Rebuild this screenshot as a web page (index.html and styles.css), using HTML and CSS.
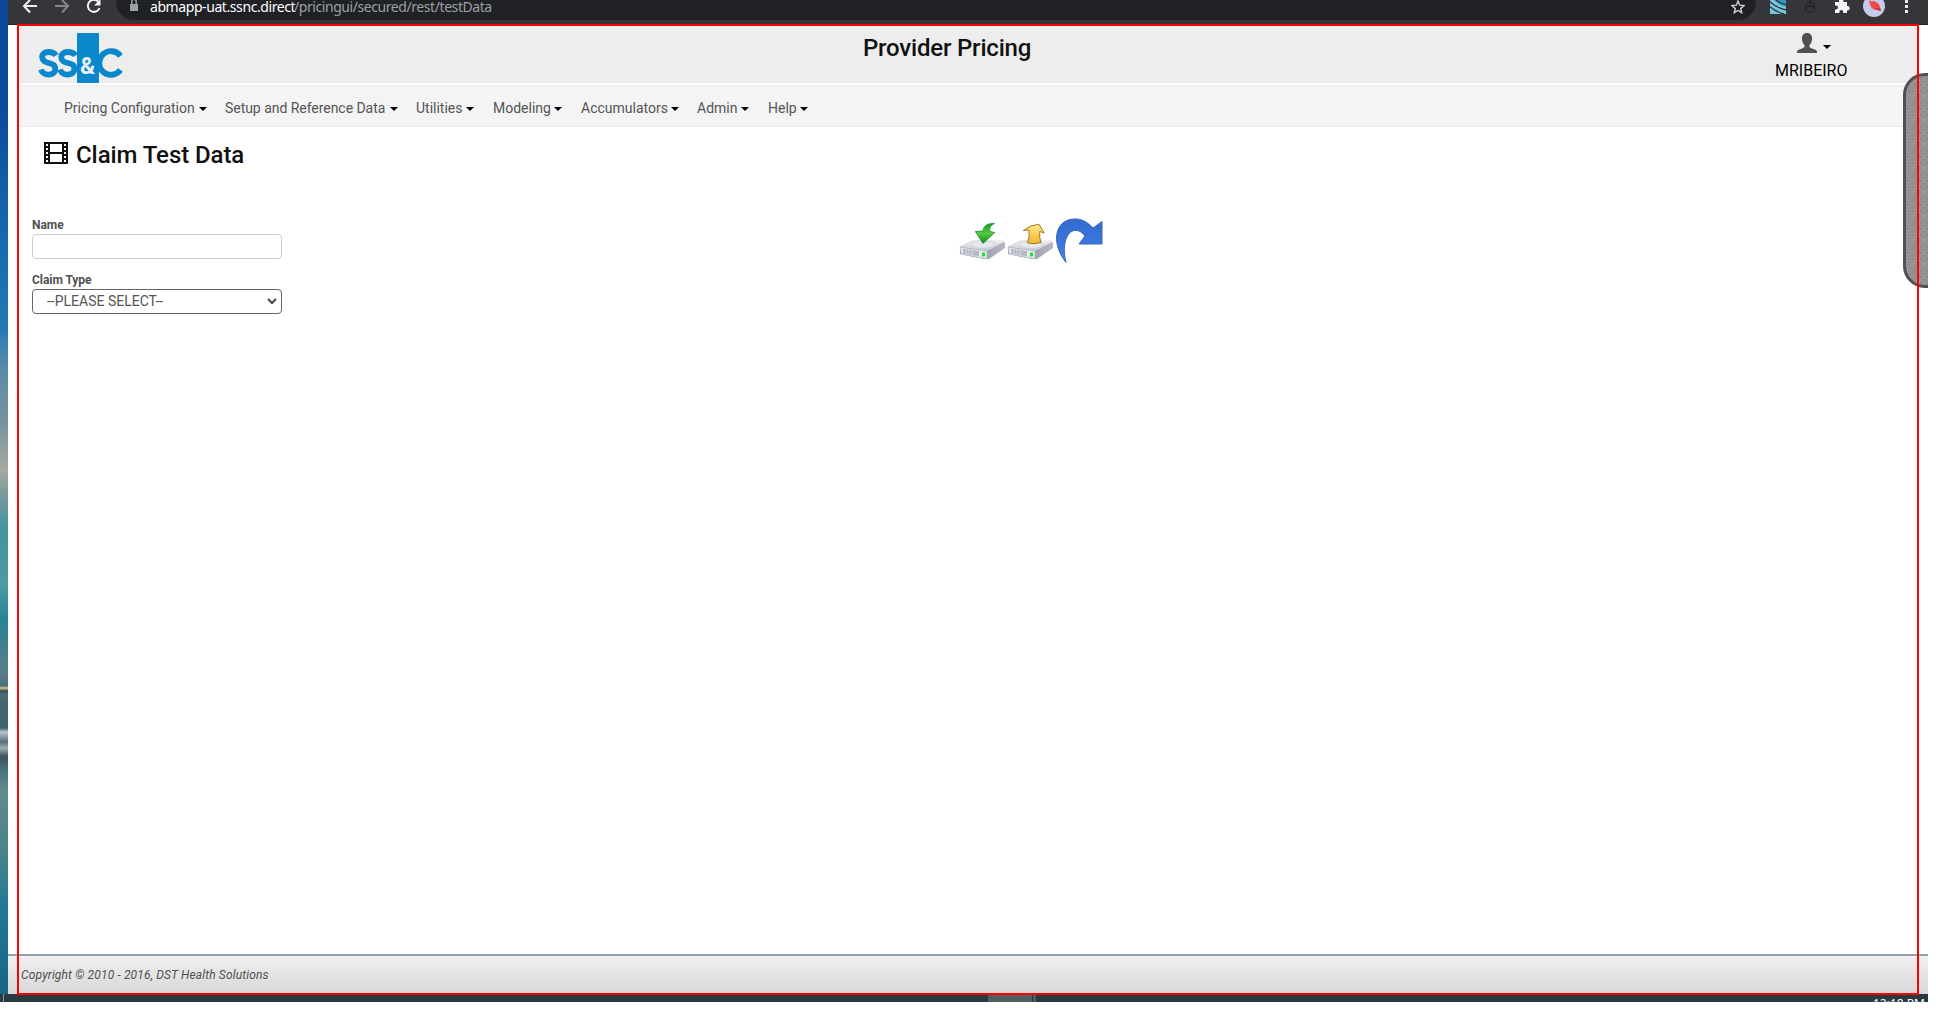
FILE: index.html
```html
<!DOCTYPE html>
<html lang="en">
<head>
<meta charset="utf-8">
<title>Provider Pricing</title>
<link rel="stylesheet" href="styles.css">
</head>
<body>
<div class="screen">
  <div class="workspace">
    <div class="wallpaper"></div>
    <div class="browser">
      <div class="toolbar">
        <svg class="nav-icons" width="100" height="25" viewBox="8 0 100 25" fill="none" stroke-width="2">
          <path d="M37 6H24M30 0L24 6L30 12.5" stroke="#f1f3f4"/>
          <path d="M55 6H68M62 0L68 6L62 12.5" stroke="#85878a"/>
          <path d="M98.500 2A6 6 0 1 0 99.500 8" stroke="#f1f3f4"/><path d="M100.500 -1V5.500H94Z" fill="#f1f3f4"/>
        </svg>
        <div class="address">
          <svg class="lock" width="10" height="12" viewBox="0 0 10 12"><path d="M1 4H9V11H1Z" fill="#9aa0a6"/><path d="M2.800 5V1.500a2.200 2.200 0 0 1 4.400 0V5" fill="none" stroke="#9aa0a6" stroke-width="1.400"/></svg>
          <span class="host">abmapp-uat.ssnc.direct</span><span class="path">/pricingui/secured/rest/testData</span>
          <svg class="star" width="14" height="14" viewBox="0 0 14 14"><path d="M7 1L8.700 5.200L13 5.600L9.700 8.500L10.700 12.700L7 10.500L3.300 12.700L4.300 8.500L1 5.600L5.300 5.200Z" fill="none" stroke="#d2d4d6" stroke-width="1.400"/></svg>
        </div>
        <svg class="extensions" width="172" height="25" viewBox="1756 0 172 25">
          <path d="M1770 0H1786V14H1770Z" fill="#73c8dc"/><path d="M1774 0H1786V7Q1779 5 1774 0Z" fill="#3297c5"/>
          <path d="M1769 1Q1778 9 1787 10M1769 6Q1776 12 1784 14M1775 -1Q1780 4 1787 5" fill="none" stroke="#35363a" stroke-width="1.300"/>
          <path d="M1805.500 6.500H1814.500V8a4.500 4.500 0 0 1-9 0ZM1806 6Q1806 2 1810 2T1814 6M1810 2V6M1810 2V0" fill="none" stroke="#202124" stroke-width="1.200"/>
          <path d="M1835 2h4V1a2.200 2.200 0 0 1 4.400 0v1h3.600v4h.500a2.200 2.200 0 0 1 0 4.400h-.5V13h-3.800v-1a1.900 1.900 0 0 0-3.800 0v1H1835V9.500h1a2 2 0 0 0 0-4h-1Z" fill="#f1f3f4"/>
          <circle cx="1874" cy="6" r="11" fill="#c5cae9"/><path d="M1869 -1Q1870 2 1873 1Q1879 2 1880 7L1881 11L1878 10Q1869 10 1869 -1Z" fill="#f04b4b"/><path d="M1874 9L1880 8L1881 11Z" fill="#c6284b"/>
          <g fill="#e8eaed"><rect x="1905" y="0" width="3" height="3"/><rect x="1905" y="5" width="3" height="3"/><rect x="1905" y="10" width="3" height="3"/></g>
        </svg>
      </div>
      <main class="page">
        <header class="header">
          <svg class="logo" width="86" height="50" viewBox="0 0 86 50">
            <rect x="39" width="22" height="50" fill="#0b87cc"/>
            <g fill="none" stroke="#0b87cc" stroke-width="5.800">
              <path d="M18 22.500C16 19 13 19 10.500 19C2 19 2.500 28 9 29.500C15 31 18 32 17 38C15 43 5 43 3 36.500"/>
              <path d="M37.500 22.500C35.500 19 32.500 19 29.500 19C21.500 19 21.500 28 28 29.500C34.500 31 37.500 32 36 38C34 43 24 43 22 36.500"/>
              <path d="M82.500 23A11.800 11.800 0 1 0 82.500 37"/>
            </g>
            <text x="42" y="40.500" class="ampersand">&amp;</text>
          </svg>
          <h1 class="app-title">Provider Pricing</h1>
          <div class="user">
            <div class="avatar">
              <svg width="20" height="20" viewBox="0 0 20 20"><path d="M10 0C13.500 0 15.500 2.500 15 6.500C14.800 8.700 13.800 11 12.500 12V14Q13 15 19 17Q20 17.500 20 20H0Q0 17.500 1 17Q7 15 7.500 14V12C6.200 11 5.200 8.700 5 6.500C4.500 2.500 6.500 0 10 0Z" fill="#505050"/></svg>
              <i class="caret"></i>
            </div>
            <div class="username">MRIBEIRO</div>
          </div>
        </header>
        <nav class="menu">
          <a class="m1"><span>Pricing Configuration</span><i class="caret"></i></a>
          <a class="m2"><span>Setup and Reference Data</span><i class="caret"></i></a>
          <a class="m3"><span>Utilities</span><i class="caret"></i></a>
          <a class="m4"><span>Modeling</span><i class="caret"></i></a>
          <a class="m5"><span>Accumulators</span><i class="caret"></i></a>
          <a class="m6"><span>Admin</span><i class="caret"></i></a>
          <a class="m7"><span>Help</span><i class="caret"></i></a>
        </nav>
        <div class="heading">
          <svg width="24" height="22" viewBox="0 0 24 22"><path fill="#111" fill-rule="evenodd" d="M0 0H24V22H0ZM6 2V10H18V2ZM6 12V20H18V12ZM2 2v2h2V2ZM2 6v2h2V6ZM2 10v2h2v-2ZM2 14v2h2v-2ZM2 18v2h2v-2ZM20 2v2h2V2ZM20 6v2h2V6ZM20 10v2h2v-2ZM20 14v2h2v-2ZM20 18v2h2v-2Z"/></svg>
          <h2>Claim Test Data</h2>
        </div>
        <section class="content">
          <form class="filters">
            <label for="name">Name</label>
            <input id="name" type="text">
            <label for="type">Claim Type</label>
            <div class="select" id="type"><span>--PLEASE SELECT--</span>
              <svg width="10" height="7" viewBox="0 0 10 7"><path d="M1 1L5 5L9 1" fill="none" stroke="#444" stroke-width="2"/></svg>
            </div>
          </form>
          <svg class="actions" width="150" height="50" viewBox="957 215 150 50">
            <defs>
              <linearGradient id="steel" x2="0" y2="1"><stop stop-color="#eef0f3"/><stop offset="1" stop-color="#c9cbd3"/></linearGradient>
              <linearGradient id="side"><stop stop-color="#858896"/><stop offset="1" stop-color="#b4b7c2"/></linearGradient>
              <linearGradient id="green" x2="0" y2="1"><stop stop-color="#159b22"/><stop offset=".5" stop-color="#58c842"/><stop offset="1" stop-color="#0c8a18"/></linearGradient>
              <linearGradient id="gold" x2="0" y2="1"><stop stop-color="#ffe991"/><stop offset="1" stop-color="#efb62d"/></linearGradient>
              <linearGradient id="blue" x2="0" y2="1"><stop stop-color="#336bcd"/><stop offset=".6" stop-color="#3c78df"/><stop offset="1" stop-color="#4583e6"/></linearGradient>
              <g id="drive">
                <path d="M0 7L14 0H42L45 3V8L29 19L24 19L0 14Z" fill="url(#side)"/>
                <path d="M0 7L14 0H42L44 2L27 11Z" fill="url(#steel)"/>
                <path d="M0 7L27 11V19L1 14Z" fill="#e7e8ed" stroke="#b2b4be" stroke-width=".7"/>
                <path d="M3 8.500L19 11V16.500L3 13.500Z" fill="#b9bbc4"/><path d="M6 9V14M9 9.500V14.500M12 10V15" stroke="#d3d5dc"/>
                <ellipse cx="23" cy="4.500" rx="12" ry="3.800" fill="#e6e8ed" stroke="#c2c5cd" stroke-width=".7"/>
                <rect x="22" y="12.500" width="3" height="4" rx="1" fill="#15e51b"/>
              </g>
            </defs>
            <use href="#drive" x="960" y="240"/><use href="#drive" x="1008" y="240"/>
            <path d="M994.500 223.500C987 223 983.500 226 983 231L975.300 231.500L983 243.500L994.800 232.500L990 231.500C989 228 990.500 225.500 994.500 223.500Z" fill="url(#green)" stroke="#1a962a" stroke-width=".8"/>
            <path d="M1023.300 230.500L1031 226L1039 224.300L1044.200 233L1039.800 231.500Q1039 237 1041 242.500Q1034 244.500 1027.500 243Q1030 236 1029 230Z" fill="url(#gold)" stroke="#a97419" stroke-width="1"/>
            <path d="M1066 262.500C1052 245 1054 224 1069 219.800C1080 217 1087 221.500 1093 228L1102 221.500V244H1079L1085 236C1080 229.500 1074 228.500 1069 233.500C1064 240 1063 250 1066 262.500Z" fill="url(#blue)" stroke="#3a66b5" stroke-width="1"/>
          </svg>
        </section>
        <div class="drawer"></div>
      </main>
      <footer class="footer">Copyright © 2010 - 2016, DST Health Solutions</footer>
    </div>
  </div>
  <div class="taskbar"><i class="divider"></i><i class="task"></i><span class="clock">12:18 PM</span></div>
  <div class="outline"></div>
</div>
</body>
</html>
```
FILE: styles.css
```css
* { box-sizing: border-box; }
body { margin: 0; background: #fff; font-family: Roboto, sans-serif; overflow: hidden; }
.screen { position: relative; width: 1928px; height: 1002px; overflow: hidden; display: flex; flex-direction: column; }
.workspace { display: flex; height: 994px; }
.wallpaper {
  width: 8px;
  background:
    linear-gradient(transparent 686px, #d9c78c 688px, #314753 691px, transparent 694px),
    linear-gradient(transparent 728px, #b8c6cc 732px, #596d79 742px, #9db0b5 748px, #43545e 756px, transparent 768px),
    linear-gradient(#0b4796 0, #0b4b9b 110px, #176aac 240px, #2377b3 330px, #4084af 345px, #638da6 380px, #74939e 420px, #a7aaa1 470px, #789a9c 495px, #43949f 530px, #4c9aa4 585px, #268394 620px, #587e8b 670px, #46676f 700px, #36616e 755px, #618b8b 790px, #4b8389 850px, #1f7895 910px, #196487 993px);
}
.browser { width: 1920px; display: flex; flex-direction: column; }
.toolbar { height: 25px; background: #35363a; display: flex; flex: none; border-bottom: 1px solid #222326; }
.nav-icons { width: 100px; margin-right: 8px; flex: none; }
.address { flex: 1; height: 20px; background: #202124; border-radius: 0 0 18px 18px; display: flex; padding: 0 11px 0 13px; font: 14px/18px "Noto Sans", sans-serif; }
.lock { margin-right: 11px; }
.host, .path { margin-top: -2px; white-space: nowrap; }
.host { color: #fff; width: 144px; letter-spacing: -.42px; }
.path { color: #9aa0a6; letter-spacing: -.43px; }
.star { margin-left: auto; }
.extensions { flex: none; }
.page { position: relative; height: 929px; flex: none; padding: 1px 11px 0; background: #fff; }
.header { height: 57px; background: #ededed; display: flex; }
.logo { margin: 7px 0 0 19px; }
.ampersand { font: bold 23px Roboto, sans-serif; fill: #e7f4fb; }
.app-title { font-size: 24px; font-weight: 500; line-height: 28px; margin: 8px 0 0 739px; color: #111; letter-spacing: -.2px; width: 171px; white-space: nowrap; }
.user { margin-left: auto; width: 73px; margin-right: 69px; }
.avatar { height: 28px; padding: 7px 0 0 22px; display: flex; gap: 6px; }
.caret { width: 8px; height: 4px; border: 4px solid transparent; border-top-color: #000; border-bottom: 0; display: block; flex: none; }
.avatar .caret { margin-top: 12px; }
.username { font-size: 16px; line-height: 19px; color: #000; margin-top: 7px; }
.menu { height: 42px; margin-top: 2px; padding-left: 45px; background: #f4f4f4; border: solid #ececec; border-width: 1px 0; display: flex; font-size: 14px; line-height: 45px; color: #555; }
.menu a { display: flex; justify-content: space-between; flex: none; white-space: nowrap; }
.menu .caret { margin-top: 21px; }
.m1 { width: 143px; margin-right: 18px; }
.m2 { width: 173px; margin-right: 18px; letter-spacing: -.04px; }
.m3 { width: 58px; margin-right: 19px; }
.m4 { width: 69px; margin-right: 19px; }
.m5 { width: 98px; margin-right: 18px; }
.m6 { width: 52px; margin-right: 19px; }
.m7 { width: 40px; }
.heading { height: 53px; padding: 15px 0 0 25px; display: flex; gap: 8px; }
h2 { margin: -1px 0 0; font-size: 24px; line-height: 28px; font-weight: 500; color: #111; letter-spacing: -.08px; }
.content { display: flex; padding: 35px 0 0 13px; }
.filters { width: 250px; display: flex; flex-direction: column; margin-right: 675px; color: #505050; }
.filters label { font-size: 12px; font-weight: 700; line-height: 21px; height: 19px; letter-spacing: -.05px; }
.filters input, .select { height: 25px; border: 1px solid #ccc; border-radius: 4px; background: #fff; }
.filters input { margin-bottom: 11px; }
.select { border-color: #666; display: flex; justify-content: space-between; padding: 0 4px 1px 14px; align-items: center; font-size: 14px; color: #555; }
.drawer {
  position: absolute; left: 1895px; top: 48px; width: 45px; height: 215px; border: 3px solid #505050; border-radius: 22px;
  background: radial-gradient(circle, #939393 1.500px, #b0b0b0 2px, #858585 2.500px, transparent 3px) 0 3px / 12px 12px, radial-gradient(circle, #939393 1.500px, #b0b0b0 2px, #858585 2.500px, transparent 3px) 6px 9px / 12px 12px, #929292;
}
.footer { height: 40px; background: linear-gradient(#f0f0f0, #d7d7d7); border-top: 2px solid #8ba1ad; padding-left: 13px; font-size: 12px; font-style: italic; line-height: 39px; color: #505050; letter-spacing: .15px; }
.taskbar { height: 8px; background: #263a42; display: flex; overflow: hidden; color: #fff; }
.divider { width: 1px; margin-left: 3px; background: #8b969a; }
.task { margin-left: 984px; width: 48px; background: linear-gradient(90deg, #505e60 44px, #29383d 44px, #29383d 45px, #505e60 45px); }
.clock { margin-left: auto; width: 55px; font: 12px/14px "Noto Sans", sans-serif; margin-top: 3px; white-space: nowrap; }
.outline { position: absolute; left: 17px; top: 24px; width: 1902px; height: 971px; border: 2px solid #f00; pointer-events: none; }
```
